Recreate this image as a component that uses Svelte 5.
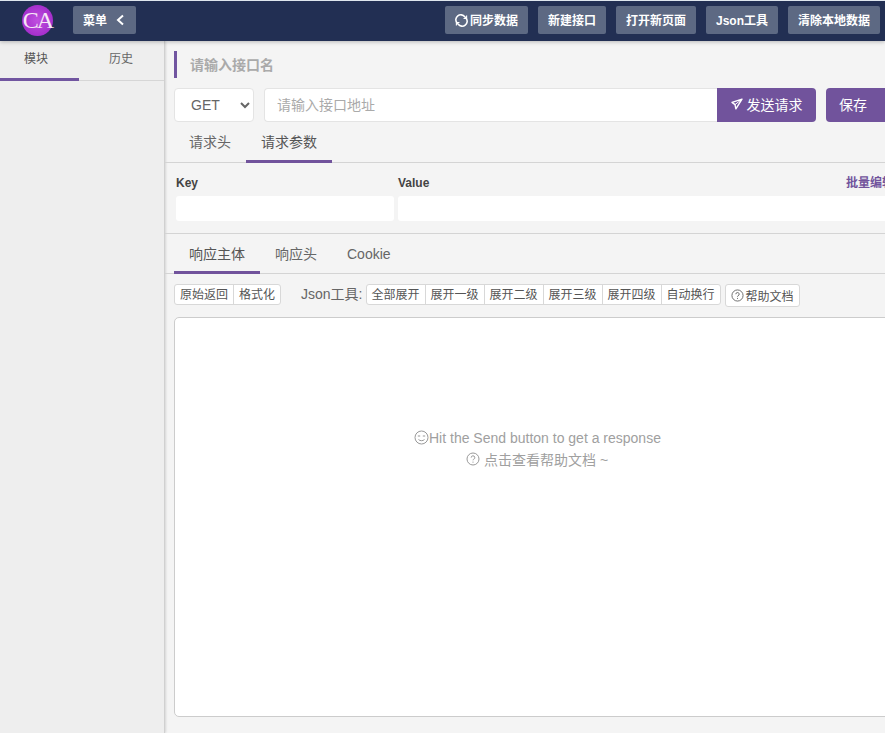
<script>
  const headerActions = ["新建接口", "打开新页面", "Json工具", "清除本地数据"];
  const levels = ["全部展开", "展开一级", "展开二级", "展开三级", "展开四级", "自动换行"];
</script>

<div class="page">
  <header class="topbar">
    <div class="logo">CA</div>
    <button class="hbtn menu">
      <span>菜单</span>
      <svg width="10" height="12" viewBox="0 0 10 12"><path d="M8 1.5 3 6l5 4.5" fill="none" stroke="#fff" stroke-width="2" /></svg>
    </button>
    <div class="hactions">
      <button class="hbtn">
        <svg class="sync" width="13" height="13" viewBox="0 0 14 14" fill="none" stroke="#fff" stroke-width="1.7">
          <path d="M2 9.5A5 5 0 0 1 10.5 3L12 4.5" />
          <path d="M12 4.5A5 5 0 0 1 3.5 11L2 9.5" />
          <path d="M12.5 1.5v3.4H9.2M1.5 12.5V9.1h3.3" stroke-width="1.2" />
        </svg>
        <span>同步数据</span>
      </button>
      {#each headerActions as label}
        <button class="hbtn"><span>{label}</span></button>
      {/each}
    </div>
  </header>

  <div class="body">
    <aside class="side">
      <div class="side-tabs">
        <div class="side-tab on">模块</div>
        <div class="side-tab">历史</div>
      </div>
    </aside>

    <main class="main">
      <div class="title">请输入接口名</div>

      <div class="url-row">
        <select class="method">
          <option>GET</option>
        </select>
        <input class="url" placeholder="请输入接口地址" />
        <button class="send">
          <svg width="12" height="12" viewBox="0 0 12 12" fill="none" stroke="#fff" stroke-width="1.4" stroke-linejoin="round">
            <path d="M11 1.2 1 4.4l3 2.2.9 4.2z" />
            <path d="M4 6.6 11 1.2" stroke-width="1" />
          </svg>
          发送请求
        </button>
        <button class="save">保存</button>
      </div>

      <nav class="tabs req-tabs">
        <div class="tab">请求头</div>
        <div class="tab on">请求参数</div>
      </nav>

      <section class="params">
        <div class="param-col key">
          <div class="param-label">Key</div>
          <input class="param-input" />
        </div>
        <div class="param-col val">
          <div class="param-label">
            Value
            <span class="bulk">批量编辑</span>
          </div>
          <input class="param-input" />
        </div>
      </section>

      <nav class="tabs res-tabs">
        <div class="tab on">响应主体</div>
        <div class="tab">响应头</div>
        <div class="tab">Cookie</div>
      </nav>

      <div class="tools">
        <div class="group">
          <span>原始返回</span><span>格式化</span>
        </div>
        <span class="tool-label">Json工具:</span>
        <div class="group">
          {#each levels as l}
            <span>{l}</span>
          {/each}
        </div>
        <button class="help-btn">
          <svg width="13" height="13" viewBox="0 0 14 14" fill="none" stroke="#666" stroke-width="1">
            <circle cx="7" cy="7" r="6" />
            <path d="M5.2 5.6A1.8 1.8 0 1 1 7.6 7.3c-.5.2-.6.5-.6 1" />
            <path d="M7 9.6v1.1" />
          </svg>
          帮助文档
        </button>
      </div>

      <div class="response">
        <div class="hint">
          <svg width="15" height="15" viewBox="0 0 15 15" fill="none" stroke="#999" stroke-width="1">
            <circle cx="7.5" cy="7.5" r="6.5" />
            <path d="M3.8 6h2.4M8.8 6h2.4M4.5 9.5c1.5 1.6 4.5 1.6 6 0" />
          </svg><span>Hit the Send button to get a response</span>
        </div>
        <div class="hint second">
          <svg width="14" height="14" viewBox="0 0 14 14" fill="none" stroke="#999" stroke-width="1">
            <circle cx="7" cy="7" r="6" />
            <path d="M5.2 5.6A1.8 1.8 0 1 1 7.6 7.3c-.5.2-.6.5-.6 1" />
            <path d="M7 9.6v1.1" />
          </svg>
          <span>点击查看帮助文档 ~</span>
        </div>
      </div>
    </main>
  </div>
</div>

<style>
  :global(body) {
    margin: 0;
    overflow: hidden;
  }
  .page {
    width: 885px;
    height: 733px;
    overflow: hidden;
    display: flex;
    flex-direction: column;
    font-family: "Liberation Sans", "Noto Sans CJK SC", sans-serif;
    background: #f4f4f4;
    color: #666;
  }
  button, input, select {
    font-family: inherit;
  }
  .topbar {
    flex: 0 0 41px;
    box-sizing: border-box;
    border-top: 1px solid #dfe6ee;
    padding: 0 0 2px 22px;
    display: flex;
    align-items: center;
    background: #222f53;
    box-shadow: 0 1px 4px rgba(0, 0, 0, 0.25);
    position: relative;
  }
  .logo {
    width: 31px;
    height: 31px;
    border-radius: 50%;
    background: radial-gradient(circle at 50% 50%, #c04fe0 0, #a52fcc 70%, #8a2ab0 100%);
    color: #f6e6f6;
    font-family: "Liberation Serif", serif;
    font-size: 24px;
    letter-spacing: -2px;
    line-height: 31px;
    text-align: center;
    white-space: nowrap;
  }
  .hbtn {
    height: 28px;
    padding: 0 10px;
    border: 0;
    border-radius: 2px;
    background: #5d6983;
    color: #fff;
    font-size: 12px;
    font-weight: 700;
    display: flex;
    align-items: center;
    gap: 2px;
    white-space: nowrap;
  }
  .hbtn span {
    margin-top: -2px;
  }
  .sync {
    margin-top: 1px;
  }
  .menu {
    margin-left: 20px;
    width: 63px;
    gap: 8px;
    padding: 0 10px;
  }
  .hactions {
    margin-left: auto;
    margin-right: 5px;
    display: flex;
    gap: 10px;
  }
  .body {
    flex: 1;
    display: flex;
    min-height: 0;
  }
  .side {
    flex: 0 0 165px;
    box-sizing: border-box;
    background: #eee;
    border-right: 1px solid #d0d0d0;
    box-shadow: 1px 0 2px rgba(0, 0, 0, 0.12);
  }
  .side-tabs {
    display: flex;
    height: 40px;
    box-sizing: border-box;
    border-bottom: 1px solid #d6d6d6;
  }
  .side-tab {
    flex: 0 0 79px;
    box-sizing: border-box;
    height: 40px;
    font-size: 12px;
    line-height: 36px;
    color: #666;
    padding-left: 24px;
  }
  .side-tab + .side-tab {
    flex: 0 0 85px;
    padding-left: 30px;
  }
  .side-tab.on {
    border-bottom: 3px solid #7155a0;
    color: #555;
  }
  .main {
    flex: 1;
    min-width: 0;
    padding: 10px 0 0 9px;
    overflow: hidden;
  }
  .title {
    height: 27px;
    line-height: 29px;
    box-sizing: border-box;
    border-left: 3px solid #7155a0;
    padding-left: 13px;
    font-size: 14px;
    font-weight: 700;
    color: #aaa;
  }
  .url-row {
    margin-top: 10px;
    display: flex;
    height: 34px;
    width: 760px;
  }
  .method {
    width: 80px;
    height: 34px;
    box-sizing: border-box;
    border: 1px solid #e4e4e4;
    border-radius: 4px;
    background: #fff;
    color: #666;
    font-size: 14px;
    padding-left: 12px;
  }
  .url {
    margin-left: 10px;
    width: 453px;
    height: 34px;
    box-sizing: border-box;
    border: 1px solid #e4e4e4;
    border-right: 0;
    border-radius: 4px 0 0 4px;
    padding: 0 12px;
    font-size: 14px;
    background: #fff;
    outline: none;
  }
  .url::placeholder {
    color: #aaa;
  }
  .send {
    width: 99px;
    height: 34px;
    border: 0;
    border-radius: 0 4px 4px 0;
    background: #71539c;
    color: #fff;
    font-size: 14px;
    display: flex;
    align-items: center;
    justify-content: center;
    gap: 4px;
    padding-bottom: 4px;
  }
  .save {
    margin-left: 10px;
    flex: 0 0 70px;
    height: 34px;
    border: 0;
    border-radius: 4px;
    background: #71539c;
    color: #fff;
    font-size: 14px;
    text-align: left;
    padding: 0 0 3px 13px;
  }
  .tabs {
    display: flex;
    box-sizing: border-box;
    border-bottom: 1px solid #d4d4d4;
    margin-left: -9px;
    padding-left: 9px;
  }
  .req-tabs {
    height: 41px;
  }
  .res-tabs {
    height: 40px;
  }
  .tab {
    box-sizing: border-box;
    height: 100%;
    padding: 0 15px;
    font-size: 14px;
    line-height: 40px;
    color: #666;
    white-space: nowrap;
  }
  .tab.on {
    border-bottom: 3px solid #71539c;
    margin-bottom: -1px;
    height: calc(100% + 1px);
    color: #555;
  }
  .params {
    margin-left: -9px;
    padding: 13px 0 12px 11px;
    display: flex;
    gap: 4px;
    border-bottom: 1px solid #d4d4d4;
    height: 71px;
    box-sizing: border-box;
    width: 730px;
  }
  .param-col.key {
    flex: 0 0 218px;
  }
  .param-col.val {
    flex: 0 0 520px;
  }
  .param-label {
    font-size: 12px;
    font-weight: 700;
    color: #444;
    height: 20px;
    line-height: 14px;
    position: relative;
  }
  .bulk {
    position: absolute;
    left: 448px;
    top: 0;
    color: #71539c;
    white-space: nowrap;
  }
  .param-input {
    display: block;
    width: 100%;
    height: 25px;
    box-sizing: border-box;
    border: 0;
    border-radius: 3px;
    background: #fff;
  }
  .tools {
    display: flex;
    align-items: flex-start;
    margin-top: 10px;
    height: 33px;
  }
  .group {
    display: flex;
    border: 1px solid #d8d8d8;
    border-radius: 3px;
    background: #fff;
    height: 21px;
    box-sizing: border-box;
  }
  .group span {
    padding: 0 5px;
    font-size: 12px;
    line-height: 20px;
    color: #555;
    white-space: nowrap;
  }
  .group span + span {
    border-left: 1px solid #d8d8d8;
  }
  .tool-label {
    margin-left: 20px;
    margin-right: 3px;
    font-size: 14px;
    line-height: 21px;
    color: #666;
    white-space: nowrap;
  }
  .help-btn {
    margin-left: 4px;
    height: 23px;
    padding: 0 5px;
    border: 1px solid #d8d8d8;
    border-radius: 3px;
    background: #fff;
    display: flex;
    align-items: center;
    gap: 2px;
    font-size: 12px;
    color: #555;
    white-space: nowrap;
  }
  .response {
    width: 730px;
    height: 400px;
    box-sizing: border-box;
    border: 1px solid #ccc;
    border-radius: 5px;
    background: #fff;
    padding-top: 109px;
    text-align: left;
  }
  .hint {
    display: flex;
    align-items: center;
    padding-left: 239px;
    height: 21px;
    font-size: 14px;
    color: #a0a0a0;
    white-space: nowrap;
  }
  .hint.second {
    padding-left: 291px;
    gap: 4px;
  }
</style>
